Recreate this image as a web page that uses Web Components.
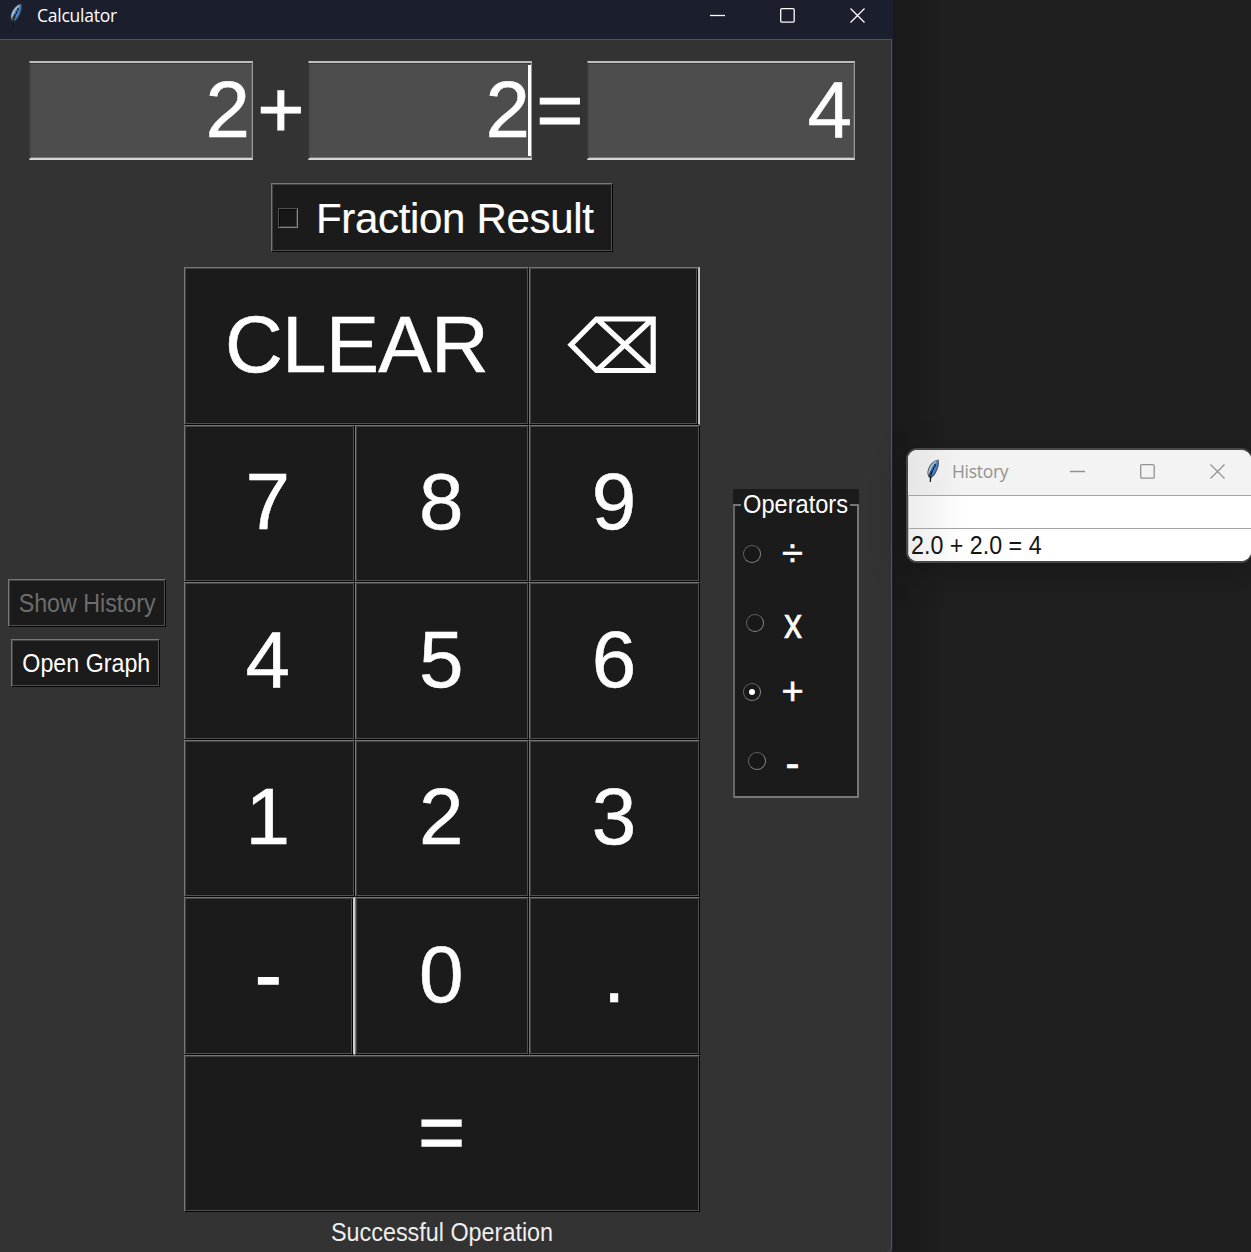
<!DOCTYPE html>
<html lang="en">
<head>
<meta charset="utf-8">
<title>Calculator</title>
<style>
html,body{margin:0;width:1251px;height:1252px;overflow:hidden;background:#1f1f1f}
body{font-family:"Liberation Sans",Arial,sans-serif}
</style>
</head>
<body>
<calc-desktop></calc-desktop>
<script>
const define = (name, html) => {
  const template = document.createElement('template');
  template.innerHTML = html;
  customElements.define(name, class extends HTMLElement {
    constructor() {
      super();
      this.attachShadow({mode: 'open'}).appendChild(template.content.cloneNode(true));
    }
  });
};

define('feather-icon', `<style>:host{display:block;width:16px;height:25px}svg{display:block}</style>
<svg width="16" height="25" viewBox="0 0 16 25">
<path d="M6 24 6 20C3 18.500 2.500 13 5.500 8C8 4 11 2 14.500 1.500C15.500 5.500 14.500 10.500 12 14.500C10.500 17.500 9 18.500 7.800 19.500Z" fill="#3a4654"/>
<path d="M4.500 17C3.500 13 5.500 8.500 8.500 5.500C10.300 3.700 12 2.700 13.800 2.300L8 10Z" fill="#a5bed2"/>
<path d="M6.700 18 8 9 13.700 2.500C14.500 6.500 13 11 10.800 14.500C9.500 17 8.300 18 6.700 18Z" fill="#4384ce"/>
<path d="M6.300 24 6.500 18M7 17 8.500 12M9.500 12 9.500 9M11 9 11 6" fill="none" stroke="#101820" stroke-width="1.200"/>
</svg>`);

define('window-controls', `<style>:host{display:flex;align-items:center;gap:54px;color:inherit}svg{display:block;fill:none;stroke:currentColor;stroke-width:1.3}</style>
<svg width="16" height="16"><path d="M0 7.500H15"/></svg>
<svg width="16" height="16"><rect x=".7" y=".7" width="13.500" height="13.500" rx="1.300"/></svg>
<svg width="16" height="16"><path d="M.5 .5 14.500 14.500M14.500 .5 .5 14.500"/></svg>`);

define('number-entry', `<style>
:host{display:flex;box-sizing:border-box;height:99px;align-items:center;justify-content:flex-end;background:#4d4d4d;color:#fff;font-size:80px;line-height:90px;-webkit-text-stroke:.5px #fff;border-top:2px solid #bdbdbd;border-bottom:2px solid #d6d6d6;border-right:1px solid #999;border-left:1px solid #3c3c3c;box-shadow:inset 0 1px #3b3b3b,inset 1px 0 #414141,inset 0 -1px #777,inset -1px 0 #666;padding:0 2px 1px 0}
i{display:none;width:3px;height:91px;background:#fff;margin-right:-1px;margin-top:1px}
:host([focused]) i{display:block}:host([focused]){padding-right:1px}
:host([focused]) span{margin-right:-2px}
</style><span><slot></slot></span><i></i>`);

define('tk-button', `<style>
:host{display:flex;box-sizing:border-box;align-items:center;justify-content:center;white-space:pre;background:#1b1b1b;color:#fff;border:1px solid;border-color:#777 #050505 #050505 #777;box-shadow:inset 1px 1px #424242,inset -1px -1px #505050}
:host([disabled]){color:#6d6d6d}
</style><slot></slot>`);

define('erase-icon', `<style>:host{display:block;white-space:normal}svg{display:block}</style>
<svg width="90" height="58" viewBox="0 0 90 58" fill="none" stroke="#fff" stroke-width="5.200"><path d="M29.500 3H86.200V54.500H29.500L4 28.700ZM30 3 85.500 54.500M85.500 3 30 54.500"/></svg>`);

define('key-pad', `<style>
:host{display:grid;width:516px;height:945px;grid-template-columns:170.500px 174.500px 171px;grid-template-rows:repeat(6,157.500px);font-size:80px;line-height:90px;-webkit-text-stroke:.5px #fff}
tk-button{padding-bottom:2px;padding-right:1px}
.clear{grid-column:span 2;letter-spacing:-.8px;padding-right:0}.equal{grid-column:span 3;padding-bottom:3px}
.equal span,.minus span{-webkit-text-stroke-width:1.3px}
.col1{padding-right:3px}
.erase{border-right:2px solid #c2c2c2;box-shadow:inset 1px 1px #424242,inset -1px 0 #050505,inset -2px -1px #505050}
.minus{border-right:2px solid #cfcfcf;box-shadow:inset 1px 1px #424242,inset -1px 0 #050505,inset -2px -1px #505050}
erase-icon{margin-right:3px}
</style>
<tk-button class="clear">CLEAR</tk-button><tk-button class="erase" aria-label="Backspace"><erase-icon></erase-icon></tk-button>
<tk-button class="col1">7</tk-button><tk-button>8</tk-button><tk-button>9</tk-button>
<tk-button class="col1">4</tk-button><tk-button>5</tk-button><tk-button>6</tk-button>
<tk-button class="col1">1</tk-button><tk-button>2</tk-button><tk-button>3</tk-button>
<tk-button class="minus"><span>-</span></tk-button><tk-button>0</tk-button><tk-button>.</tk-button>
<tk-button class="equal"><span>=</span></tk-button>`);

define('fraction-toggle', `<style>
:host{display:block}tk-button{width:342px;height:69px;font-size:42px;letter-spacing:-.32px;justify-content:flex-start;padding:0 0 0 6px;-webkit-text-stroke:.2px #fff}
i{box-sizing:border-box;width:20px;height:20px;border:1px solid;border-color:#505050 #858585 #858585 #505050;background:#171717;box-shadow:inset 1px 1px #080808,inset -1px -1px #3a3a3a;margin:1px 18px 0 0}
span{margin-top:2px}
</style><tk-button><i></i><span>Fraction Result</span></tk-button>`);

define('operator-choice', `<style>
:host{display:flex;align-items:center;height:69px;color:#fff;font-size:var(--size,38px);line-height:48px;-webkit-text-stroke:.6px #fff}
i{display:flex;flex:none;align-items:center;justify-content:center;box-sizing:border-box;width:18px;height:18px;border:1px solid;border-color:#626262 #858585 #858585 #626262;border-radius:50%;margin-left:var(--inset,8px);background:#181818}
:host([checked]) i::after{content:"";width:6px;height:6px;border-radius:50%;background:#fff}
span{width:40px;text-align:center;margin-left:calc(19.500px - var(--inset,8px));transform:translateY(var(--drop,-1px)) scaleX(var(--squeeze,1))}
</style><i></i><span><slot></slot></span>`);

define('operator-panel', `<style>
:host{display:block;width:126px;background:#1b1b1b}
fieldset{box-sizing:border-box;height:309px;margin:0;padding:0;border:2px solid #777;border-left-color:#686868;min-width:0}
legend{box-sizing:border-box;width:109px;margin-left:6px;padding:0 0 0 2px;color:#fff;font-size:25px;line-height:31px;white-space:nowrap}
legend span{display:block;transform:scaleX(.945);transform-origin:left}
.items{display:flex;flex-direction:column;margin-top:-1px}
</style><fieldset><legend><span>Operators</span></legend><div class="items">
<operator-choice>÷</operator-choice><operator-choice style="--inset:11px;--size:42px;--drop:1px;--squeeze:.86">x</operator-choice><operator-choice checked>+</operator-choice><operator-choice style="--inset:13px;--size:42px;--drop:3px">-</operator-choice></div></fieldset>`);

define('calc-window', `<style>
:host{display:flex;flex-direction:column;box-sizing:border-box;width:893px;height:1252px;background:#333;border-right:1px solid #1b1f34}
header{display:flex;box-sizing:border-box;height:40px;background:#1b1e2d;border-bottom:1px solid #505158;align-items:flex-start;color:#fff}
feather-icon{margin:2px 0 0 7px}
h1{margin:4px 0 0 14px;font:400 17.500px/22px "Open Sans","Noto Sans",sans-serif;letter-spacing:-.25px}
window-controls{margin:8px 26px 0 auto}
main{display:flex;flex-direction:column;flex:1;border-right:1px solid #56575d;border-bottom-right-radius:5px}
.equation{display:flex;margin-left:29px;margin-top:21px}
.symbol{display:flex;width:55px;justify-content:center;align-items:center;box-sizing:border-box;height:99px;font-size:80px;line-height:90px;color:#fff;padding-bottom:2px;-webkit-text-stroke:1.2px #fff}
.symbol span{width:46px}
.operand{width:224px}.answer{width:268px}
fraction-toggle{margin:23px 0 0 271px}
.middle{display:flex;margin-top:15px;height:946px}
.actions{width:184px;padding-top:312px;font-size:25px;box-sizing:border-box}
.actions span{transform:translateX(.5px) scaleX(.93)}
.history{width:158px;height:48px;margin-left:8px}.graph{width:149px;height:48px;margin:12px 0 0 11px}
operator-panel{margin:222px 0 auto 33px}
footer{font-size:25px;line-height:28px;color:#eee;text-align:center;margin:4.500px 0 0;width:884px;height:28px;transform:scaleX(.935)}
</style>
<header><feather-icon></feather-icon><h1>Calculator</h1><window-controls></window-controls></header>
<main><div class="equation"><number-entry class="operand">2</number-entry><div class="symbol"><span>+</span></div><number-entry class="operand" focused>2</number-entry><div class="symbol"><span>=</span></div><number-entry class="answer">4</number-entry></div>
<fraction-toggle></fraction-toggle>
<div class="middle"><div class="actions"><tk-button class="history" disabled><span>Show History</span></tk-button><tk-button class="graph"><span>Open Graph</span></tk-button></div><key-pad></key-pad><operator-panel></operator-panel></div>
<footer>Successful Operation</footer></main>`);

define('history-window', `<style>
:host{display:flex;flex-direction:column;box-sizing:border-box;width:346px;height:115px;border:2px solid #474747;border-right-width:1px;border-radius:11px;background:#fff;overflow:hidden;box-shadow:0 10px 35px rgba(0,0,0,.25)}
header{display:flex;height:45px;align-items:flex-start;background:linear-gradient(90deg,#e6e6e6,#f3f3f3 55px);color:#929292;flex:none}
feather-icon{margin:8px 0 0 15.500px}
h1{margin:10px 0 0 12.500px;font:400 17.500px/22px "Open Sans","Noto Sans",sans-serif;letter-spacing:-.3px}
window-controls{margin:14px 25px 0 auto}
.row{box-sizing:border-box;border-top:1px solid #a4a4a4;border-left:1px solid #c5c5c5;height:33px;background:linear-gradient(90deg,#ededed,#fff 55px);color:#151515;font-size:25px;line-height:33px;padding-left:2px;white-space:pre;flex:none}
.row span{display:block;transform:scaleX(.93);transform-origin:left}
</style><header><feather-icon></feather-icon><h1>History</h1><window-controls></window-controls></header><div class="row"></div><div class="row"><span>2.0 + 2.0 = 4</span></div>`);

define('calc-desktop', `<style>
:host{display:block;position:relative;width:1251px;height:1252px;overflow:hidden;background:linear-gradient(90deg,#191919 893px,#1f1f1f 945px)}
calc-window{position:absolute;left:0;top:0}
history-window{position:absolute;left:906px;top:448px}
</style><calc-window></calc-window><history-window></history-window>`);
</script>
</body>
</html>
